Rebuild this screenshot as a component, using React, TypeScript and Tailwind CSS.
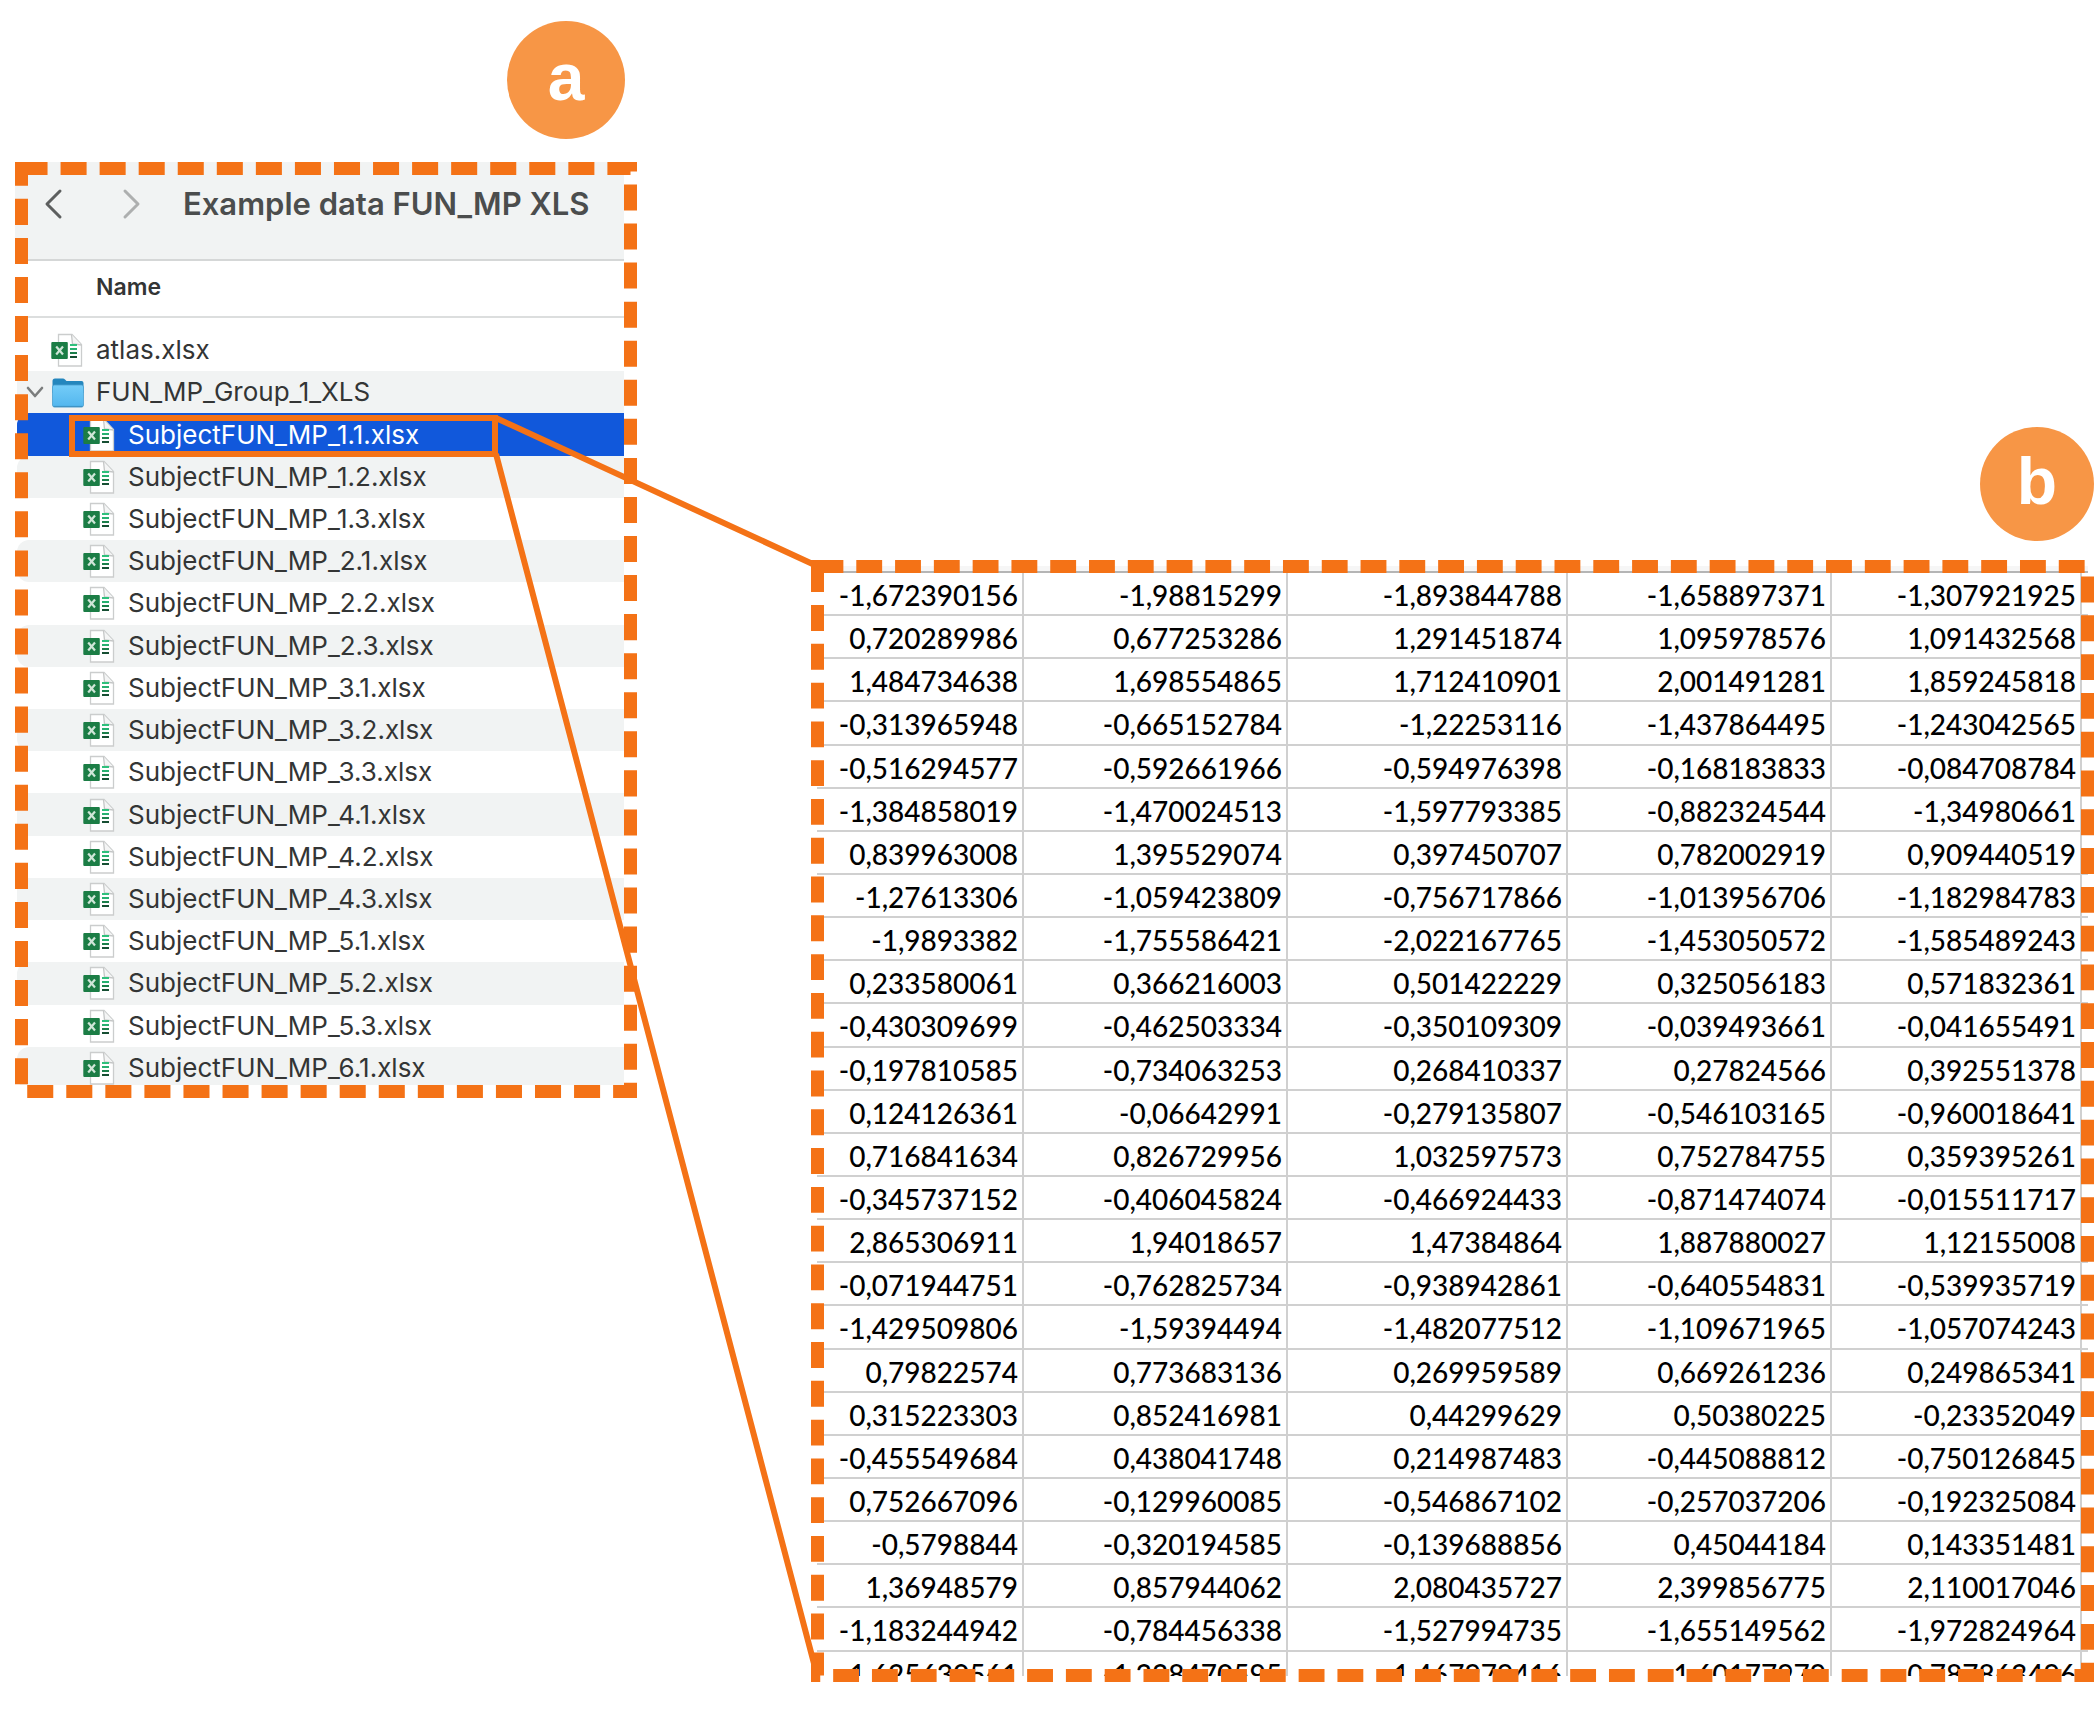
import React from "react";

const ORANGE = "#f47216";

const files = [
  "1.1", "1.2", "1.3", "2.1", "2.2", "2.3", "3.1", "3.2",
  "3.3", "4.1", "4.2", "4.3", "5.1", "5.2", "5.3", "6.1",
];

const data = `-1,672390156 -1,98815299 -1,893844788 -1,658897371 -1,307921925
0,720289986 0,677253286 1,291451874 1,095978576 1,091432568
1,484734638 1,698554865 1,712410901 2,001491281 1,859245818
-0,313965948 -0,665152784 -1,22253116 -1,437864495 -1,243042565
-0,516294577 -0,592661966 -0,594976398 -0,168183833 -0,084708784
-1,384858019 -1,470024513 -1,597793385 -0,882324544 -1,34980661
0,839963008 1,395529074 0,397450707 0,782002919 0,909440519
-1,27613306 -1,059423809 -0,756717866 -1,013956706 -1,182984783
-1,9893382 -1,755586421 -2,022167765 -1,453050572 -1,585489243
0,233580061 0,366216003 0,501422229 0,325056183 0,571832361
-0,430309699 -0,462503334 -0,350109309 -0,039493661 -0,041655491
-0,197810585 -0,734063253 0,268410337 0,27824566 0,392551378
0,124126361 -0,06642991 -0,279135807 -0,546103165 -0,960018641
0,716841634 0,826729956 1,032597573 0,752784755 0,359395261
-0,345737152 -0,406045824 -0,466924433 -0,871474074 -0,015511717
2,865306911 1,94018657 1,47384864 1,887880027 1,12155008
-0,071944751 -0,762825734 -0,938942861 -0,640554831 -0,539935719
-1,429509806 -1,59394494 -1,482077512 -1,109671965 -1,057074243
0,79822574 0,773683136 0,269959589 0,669261236 0,249865341
0,315223303 0,852416981 0,44299629 0,50380225 -0,23352049
-0,455549684 0,438041748 0,214987483 -0,445088812 -0,750126845
0,752667096 -0,129960085 -0,546867102 -0,257037206 -0,192325084
-0,5798844 -0,320194585 -0,139688856 0,45044184 0,143351481
1,36948579 0,857944062 2,080435727 2,399856775 2,110017046
-1,183244942 -0,784456338 -1,527994735 -1,655149562 -1,972824964
-1,625630561 -1,228470595 -1,467979416 -1,60177979 -0,787863496`
  .split("\n")
  .map((line) => line.split(" "));

function DashedFrame({ dash }: { dash: string }) {
  return (
    <svg className="pointer-events-none absolute inset-0 h-full w-full overflow-visible" aria-hidden="true">
      <rect
        className="h-[calc(100%-13px)] w-[calc(100%-13px)]"
        x="6.5"
        y="6.5"
        fill="none"
        stroke={ORANGE}
        strokeWidth="13"
        strokeDasharray={dash}
      />
    </svg>
  );
}

function ExcelIcon() {
  return (
    <svg className="h-[34px] w-[34px] shrink-0" viewBox="0 0 34 34" aria-hidden="true">
      <path d="M8.5 1.500h13.500l9.500 10v21.500H8.500z" fill="#fff" stroke="#cbcdcd" strokeWidth="1.300" />
      <path d="M21.500 1.500l1 9.500l9 1" fill="#f4f5f5" stroke="#c4c6c6" strokeWidth="1.300" />
      <rect x="20" y="11" width="7" height="2" fill="#2fc07c" />
      <rect x="20" y="15" width="7" height="2" fill="#27b070" />
      <rect x="20" y="19" width="7" height="2" fill="#1c7f4b" />
      <rect x="20" y="23" width="7" height="2" fill="#164f33" />
      <rect x="1.300" y="9" width="16.500" height="17" rx="1" fill="#1b7d45" />
      <path d="M6.200 13.500l6.800 8M13 13.500l-6.800 8" stroke="#cfe6d8" strokeWidth="2.200" />
    </svg>
  );
}

function FolderIcon() {
  return (
    <svg className="h-[34px] w-[34px] shrink-0" viewBox="0 0 34 34" aria-hidden="true">
      <defs>
        <linearGradient id="folder-front" x1="0" y1="0" x2="0" y2="1">
          <stop offset="0" stopColor="#74ccf8" />
          <stop offset="1" stopColor="#52b6ee" />
        </linearGradient>
      </defs>
      <path d="M2.500 6q0-2.500 2.500-2.500h8q1 0 2 1l1.500 1.500h15q2 0 2 2v10H2.500z" fill="#2486bd" />
      <rect x="2.500" y="10" width="31" height="22" rx="2" fill="url(#folder-front)" stroke="#4a9fcf" strokeWidth="0.800" />
      <path d="M3.500 31.500h29" stroke="#3f93c4" strokeWidth="1.200" />
    </svg>
  );
}

function Badge({ letter, large }: { letter: string; large?: boolean }) {
  return (
    <div
      className={
        "flex items-center justify-center rounded-full bg-[#f79646] pb-[6px] text-[66px] leading-none font-bold text-white " +
        (large ? "size-[118px]" : "size-[114px]")
      }
    >
      {letter}
    </div>
  );
}

function FileBrowser() {
  return (
    <div className="relative h-[936px]">
      <div className="mr-[13px] flex h-[923px] flex-col overflow-hidden font-['Inter',sans-serif] text-[#333535]">
        <header className="flex h-[99px] shrink-0 items-start border-b-2 border-[#d5d7d7] bg-[#f1f3f3] pt-[21px] pl-[28px]">
          <button type="button" aria-label="Back" className="flex h-[42px] w-[78px] items-center">
            <svg className="h-[32px] w-[22px]" viewBox="0 0 22 32" fill="none" aria-hidden="true">
              <path d="M17 3L4 16L17 29" stroke="#5d5f5f" strokeWidth="3" strokeLinecap="round" strokeLinejoin="round" />
            </svg>
          </button>
          <button type="button" aria-label="Forward" className="flex h-[42px] w-[62px] items-center">
            <svg className="h-[32px] w-[22px]" viewBox="0 0 22 32" fill="none" aria-hidden="true">
              <path d="M4 3L17 16L4 29" stroke="#adafaf" strokeWidth="3" strokeLinecap="round" strokeLinejoin="round" />
            </svg>
          </button>
          <h1 className="text-[31px] leading-[42px] font-semibold whitespace-nowrap text-[#4b4d4d]">
            Example data FUN_MP XLS
          </h1>
        </header>
        <div className="flex h-[57px] shrink-0 items-center border-b-2 border-[#dcdede] pb-[2px] pl-[81px] text-[23px] font-semibold">
          Name
        </div>
        <ul className="mt-[11px] ml-[2px] grid h-[760px] shrink-0 auto-rows-fr text-[26px] leading-[32px] whitespace-nowrap">
          <li className="flex items-center gap-[12px] pl-[33px]">
            <ExcelIcon />
            atlas.xlsx
          </li>
          <li className="flex items-center rounded-l-xl bg-[#f1f3f3] pl-[9px]">
            <button type="button" aria-label="Collapse folder" className="w-[24px]">
              <svg className="h-[12px] w-[18px]" viewBox="0 0 18 12" fill="none" aria-hidden="true">
                <path d="M2 2l7 8l7-8" stroke="#7b7d7d" strokeWidth="2.600" strokeLinecap="round" strokeLinejoin="round" />
              </svg>
            </button>
            <FolderIcon />
            <span className="ml-[12px]">FUN_MP_Group_1_XLS</span>
          </li>
          {files.map((id, i) => (
            <li
              key={id}
              className={
                "flex items-center gap-[12px] rounded-l-xl pl-[65px] " +
                (i === 0 ? "bg-[#1158db] text-white" : i % 2 ? "bg-[#f1f3f3]" : "bg-white")
              }
            >
              <ExcelIcon />
              SubjectFUN_MP_{id}.xlsx
            </li>
          ))}
        </ul>
      </div>
      <DashedFrame dash="26.04 13.02" />
    </div>
  );
}

function Spreadsheet() {
  return (
    <div className="relative p-[6px]">
      <div className="h-[1110px] overflow-hidden">
        <div className="h-[7px] border-b-2 border-[#b5b5b5] bg-[#f6f6f6]" />
        <table className="h-[1122px] w-full table-fixed border-separate border-spacing-0 font-['Lato',sans-serif] text-[28px] leading-[32px] font-medium text-black">
          <colgroup>
            <col className="w-[207px]" />
            <col className="w-[264px]" />
            <col className="w-[280px]" />
            <col className="w-[264px]" />
            <col />
            <col className="w-[6px]" />
          </colgroup>
          <tbody>
            {data.map((row, r) => (
              <tr key={r}>
                {row.map((value, c) => (
                  <td key={c} className="border-r-2 border-b-2 border-[#d0d0d0] p-0 pt-[3px] pr-[4px] text-right align-middle">
                    {value}
                  </td>
                ))}
                <td className="border-b-2 border-[#d0d0d0] p-0" />
              </tr>
            ))}
          </tbody>
        </table>
      </div>
      <DashedFrame dash="25.86 12.93" />
    </div>
  );
}

export default function App() {
  return (
    <main className="relative flex min-h-screen min-w-[1700px] items-start gap-[174px] bg-white pr-[6px] pb-[30px] pl-[15px] font-['Liberation_Sans',sans-serif]">
      <section className="relative w-[622px] shrink-0 pt-[21px]">
        <div className="mb-[23px] flex justify-end pr-[12px]">
          <Badge letter="a" large />
        </div>
        <FileBrowser />
        <div className="absolute top-[415px] left-[54px] h-[42px] w-[429px] border-6 border-[#f47216]" />
      </section>
      <section className="min-w-0 flex-1 pt-[427px]">
        <div className="mb-[19px] flex justify-end">
          <Badge letter="b" />
        </div>
        <Spreadsheet />
      </section>
      <svg
        className="pointer-events-none absolute top-[418px] left-[495px] h-[1258px] w-[322px] overflow-visible"
        viewBox="0 0 322 1258"
        fill="none"
        aria-hidden="true"
      >
        <path d="M1 0L322 148M1 36L322 1257" stroke={ORANGE} strokeWidth="6" />
      </svg>
    </main>
  );
}
